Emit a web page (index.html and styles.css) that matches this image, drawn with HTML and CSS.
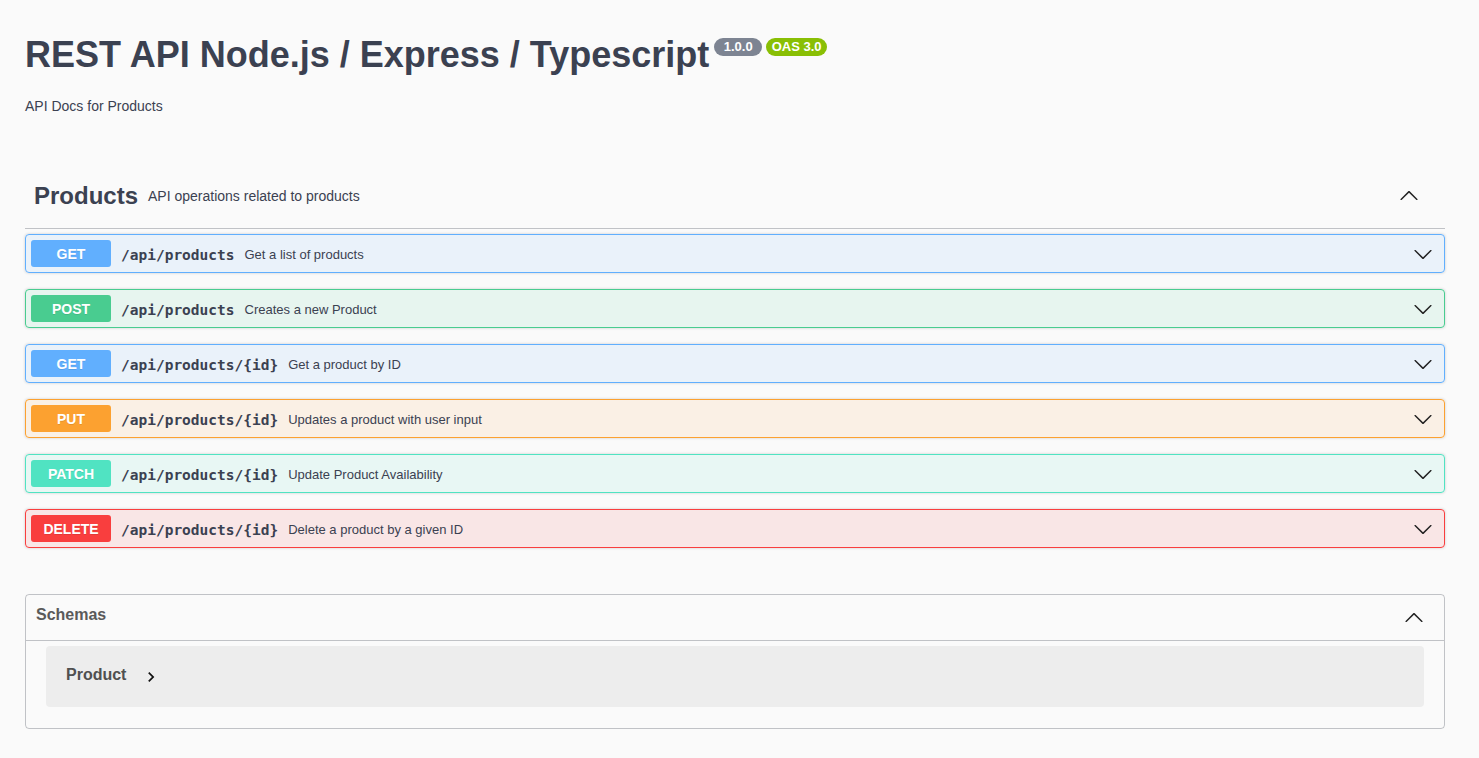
FILE: index.html
```html
<!DOCTYPE html>
<html lang="en">
<head>
<meta charset="utf-8">
<title>REST API Node.js / Express / Typescript</title>
<link rel="stylesheet" href="styles.css">
</head>
<body>
<div class="wrapper">
  <header class="info">
    <h1 class="title">REST API Node.js / Express / Typescript<span class="badge badge-version">1.0.0</span><span class="badge badge-oas">OAS 3.0</span></h1>
    <p class="info-desc">API Docs for Products</p>
  </header>

  <section class="tag-section">
    <div class="tag-header">
      <h2 class="tag-name">Products</h2>
      <small class="tag-desc">API operations related to products</small>
      <svg class="tag-arrow" viewBox="0 0 20 20" width="20" height="20"><path d="M 17.418 14.908 C 17.69 15.176 18.127 15.176 18.397 14.908 C 18.667 14.64 18.668 14.207 18.397 13.939 L 10.489 6.109 C 10.219 5.841 9.782 5.841 9.51 6.109 L 1.602 13.939 C 1.332 14.207 1.332 14.64 1.602 14.908 C 1.873 15.176 2.311 15.176 2.581 14.908 L 10 7.767 L 17.418 14.908 Z"/></svg>
    </div>

    <div class="ops">
      <div class="opblock op-get">
        <span class="method">GET</span>
        <span class="path">/api/products</span>
        <span class="op-desc">Get a list of products</span>
        <svg class="op-arrow" viewBox="0 0 20 20" width="20" height="20"><path d="M17.418 6.109c.272-.268.709-.268.979 0s.271.701 0 .969l-7.908 7.83c-.27.268-.707.268-.979 0l-7.908-7.83c-.27-.268-.27-.701 0-.969.271-.268.709-.268.979 0L10 13.25l7.418-7.141z"/></svg>
      </div>
      <div class="opblock op-post">
        <span class="method">POST</span>
        <span class="path">/api/products</span>
        <span class="op-desc">Creates a new Product</span>
        <svg class="op-arrow" viewBox="0 0 20 20" width="20" height="20"><path d="M17.418 6.109c.272-.268.709-.268.979 0s.271.701 0 .969l-7.908 7.83c-.27.268-.707.268-.979 0l-7.908-7.83c-.27-.268-.27-.701 0-.969.271-.268.709-.268.979 0L10 13.25l7.418-7.141z"/></svg>
      </div>
      <div class="opblock op-get">
        <span class="method">GET</span>
        <span class="path">/api/products/{id}</span>
        <span class="op-desc">Get a product by ID</span>
        <svg class="op-arrow" viewBox="0 0 20 20" width="20" height="20"><path d="M17.418 6.109c.272-.268.709-.268.979 0s.271.701 0 .969l-7.908 7.83c-.27.268-.707.268-.979 0l-7.908-7.83c-.27-.268-.27-.701 0-.969.271-.268.709-.268.979 0L10 13.25l7.418-7.141z"/></svg>
      </div>
      <div class="opblock op-put">
        <span class="method">PUT</span>
        <span class="path">/api/products/{id}</span>
        <span class="op-desc">Updates a product with user input</span>
        <svg class="op-arrow" viewBox="0 0 20 20" width="20" height="20"><path d="M17.418 6.109c.272-.268.709-.268.979 0s.271.701 0 .969l-7.908 7.83c-.27.268-.707.268-.979 0l-7.908-7.83c-.27-.268-.27-.701 0-.969.271-.268.709-.268.979 0L10 13.25l7.418-7.141z"/></svg>
      </div>
      <div class="opblock op-patch">
        <span class="method">PATCH</span>
        <span class="path">/api/products/{id}</span>
        <span class="op-desc">Update Product Availability</span>
        <svg class="op-arrow" viewBox="0 0 20 20" width="20" height="20"><path d="M17.418 6.109c.272-.268.709-.268.979 0s.271.701 0 .969l-7.908 7.83c-.27.268-.707.268-.979 0l-7.908-7.83c-.27-.268-.27-.701 0-.969.271-.268.709-.268.979 0L10 13.25l7.418-7.141z"/></svg>
      </div>
      <div class="opblock op-delete">
        <span class="method">DELETE</span>
        <span class="path">/api/products/{id}</span>
        <span class="op-desc">Delete a product by a given ID</span>
        <svg class="op-arrow" viewBox="0 0 20 20" width="20" height="20"><path d="M17.418 6.109c.272-.268.709-.268.979 0s.271.701 0 .969l-7.908 7.83c-.27.268-.707.268-.979 0l-7.908-7.83c-.27-.268-.27-.701 0-.969.271-.268.709-.268.979 0L10 13.25l7.418-7.141z"/></svg>
      </div>
    </div>
  </section>

  <section class="models">
    <div class="models-header">
      <h4 class="models-title">Schemas</h4>
      <svg class="models-arrow" viewBox="0 0 20 20" width="20" height="20"><path d="M 17.418 14.908 C 17.69 15.176 18.127 15.176 18.397 14.908 C 18.667 14.64 18.668 14.207 18.397 13.939 L 10.489 6.109 C 10.219 5.841 9.782 5.841 9.51 6.109 L 1.602 13.939 C 1.332 14.207 1.332 14.64 1.602 14.908 C 1.873 15.176 2.311 15.176 2.581 14.908 L 10 7.767 L 17.418 14.908 Z"/></svg>
    </div>
    <div class="model-container">
      <span class="model-title">Product</span>
      <svg class="model-toggle" viewBox="0 0 24 24" width="20" height="20"><path d="M10 6L8.59 7.41 13.17 12l-4.58 4.59L10 18l6-6z"/></svg>
    </div>
  </section>
</div>
</body>
</html>
```

FILE: styles.css
```css
html, body {
  margin: 0;
  padding: 0;
}

body {
  background: #fafafa;
  font-family: "Liberation Sans", Arial, sans-serif;
  color: #3b4151;
}

.wrapper {
  width: 1420px;
  padding: 0 0 0 25px;
}

/* Info */
.info {
  padding-top: 33px;
}

.title {
  display: flex;
  align-items: flex-start;
  margin: 0;
  font-size: 36px;
  line-height: 44px;
  font-weight: 700;
  color: #3b4151;
}

.badge {
  margin-top: 5px;
  font-size: 13px;
  line-height: 14px;
  font-weight: 700;
  color: #fff;
  border-radius: 57px;
}

.badge-version {
  background: #7d8492;
  padding: 2px 9.5px;
  margin-left: 5px;
}

.badge-oas {
  background: #89bf04;
  padding: 2px 5.5px;
  margin-left: 4px;
}

.info-desc {
  margin: 21px 0 0;
  font-size: 14px;
  line-height: 16px;
}

/* Tag section */
.tag-section {
  margin-top: 50px;
}

.tag-header {
  display: flex;
  align-items: center;
  height: 64px;
  padding: 0 26px 0 9px;
  border-bottom: 1px solid rgba(59, 65, 81, 0.3);
}

.tag-name {
  margin: 0;
  font-size: 24px;
  line-height: 28px;
  font-weight: 700;
}

.tag-desc {
  flex: 1;
  padding: 0 10px;
  font-size: 14px;
  line-height: 16px;
}

.tag-arrow {
  margin-bottom: 3px;
  fill: #222;
}

.ops {
  padding-top: 5px;
  padding-bottom: 1px;
}

.opblock {
  display: flex;
  align-items: center;
  padding: 5px;
  margin-bottom: 16px;
  border: 1px solid;
  border-radius: 4px;
  box-shadow: 0 0 3px rgba(0, 0, 0, 0.19);
}

.method {
  width: 80px;
  padding: 7px 0 5px;
  font-size: 14px;
  line-height: 15px;
  font-weight: 700;
  text-align: center;
  color: #fff;
  border-radius: 3px;
  text-shadow: 0 1px 0 rgba(0, 0, 0, 0.1);
}

.path {
  padding: 2px 10px 0;
  font-family: "DejaVu Sans Mono", "Liberation Mono", monospace;
  font-size: 14.5px;
  font-weight: 700;
  color: #3b4151;
}

.op-desc {
  flex: 1;
  padding-top: 2px;
  font-size: 13px;
  line-height: 15px;
  color: #3b4151;
}

.op-arrow {
  margin-right: 6px;
  fill: #222;
}

.op-get { border-color: #61affe; background: rgba(97, 175, 254, 0.1); }
.op-get .method { background: #61affe; }
.op-post { border-color: #49cc90; background: rgba(73, 204, 144, 0.1); }
.op-post .method { background: #49cc90; }
.op-put { border-color: #fca130; background: rgba(252, 161, 48, 0.1); }
.op-put .method { background: #fca130; }
.op-patch { border-color: #50e3c2; background: rgba(80, 227, 194, 0.1); }
.op-patch .method { background: #50e3c2; }
.op-delete { border-color: #f93e3e; background: rgba(249, 62, 62, 0.1); }
.op-delete .method { background: #f93e3e; }

/* Models */
.models {
  margin-top: 29px;
  border: 1px solid rgba(59, 65, 81, 0.3);
  border-radius: 4px;
}

.models-header {
  display: flex;
  align-items: center;
  height: 45px;
  padding: 0 20px 0 10px;
  border-bottom: 1px solid rgba(59, 65, 81, 0.3);
}

.models-title {
  flex: 1;
  margin: 0 0 6px;
  font-size: 16px;
  line-height: 18px;
  font-weight: 700;
  color: #5a5a5a;
}

.models-arrow {
  fill: #222;
  margin-bottom: 2px;
}

.model-container {
  display: flex;
  align-items: center;
  height: 61px;
  margin: 5px 20px 21px;
  padding: 0 20px;
  background: rgba(0, 0, 0, 0.05);
  border-radius: 4px;
}

.model-title {
  margin-bottom: 4px;
  font-size: 16px;
  line-height: 18px;
  font-weight: 700;
  color: #505050;
}

.model-toggle {
  margin-left: 15px;
  fill: #111;
}
```
